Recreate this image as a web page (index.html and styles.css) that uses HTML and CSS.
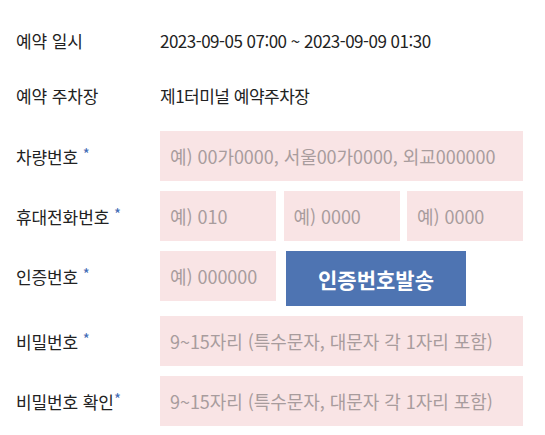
FILE: index.html
```html
<!DOCTYPE html>
<html lang="ko">
<head>
<meta charset="utf-8">
<link rel="stylesheet" href="styles.css">
</head>
<body>
<div class="form">
  <div class="row info">
    <div class="label">예약 일시</div>
    <div class="value">2023-09-05 07:00 ~ 2023-09-09 01:30</div>
  </div>
  <div class="row info last">
    <div class="label">예약 주차장</div>
    <div class="value">제1터미널 예약주차장</div>
  </div>
  <div class="fields">
    <div class="row">
      <div class="label">차량번호&nbsp;<span class="req">*</span></div>
      <div class="inputs"><div class="input wide">예) 00가0000, 서울00가0000, 외교000000</div></div>
    </div>
    <div class="row">
      <div class="label">휴대전화번호&nbsp;<span class="req">*</span></div>
      <div class="inputs three">
        <div class="input">예) 010</div>
        <div class="input">예) 0000</div>
        <div class="input">예) 0000</div>
      </div>
    </div>
    <div class="row">
      <div class="label">인증번호&nbsp;<span class="req">*</span></div>
      <div class="inputs auth">
        <div class="input short">예) 000000</div>
        <button class="send">인증번호발송</button>
      </div>
    </div>
    <div class="row">
      <div class="label">비밀번호&nbsp;<span class="req">*</span></div>
      <div class="inputs"><div class="input wide">9~15자리 (특수문자, 대문자 각 1자리 포함)</div></div>
    </div>
    <div class="row">
      <div class="label">비밀번호 확인<span class="req">*</span></div>
      <div class="inputs"><div class="input wide">9~15자리 (특수문자, 대문자 각 1자리 포함)</div></div>
    </div>
  </div>
</div>
</body>
</html>
```
FILE: styles.css
```css
html, body {
  margin: 0;
  padding: 0;
  background: #ffffff;
}
body {
  font-family: "Noto Sans CJK KR", "Noto Sans", sans-serif;
  color: #222222;
}
.form {
  padding: 13px 22px 0 16px;
}
.row {
  display: flex;
  align-items: flex-start;
}
.info {
  height: 55px;
  align-items: center;
}
.info.last {
  margin-bottom: 8px;
}
.label {
  width: 144px;
  flex: none;
  height: 50px;
  display: flex;
  align-items: center;
  font-size: 17px;
  letter-spacing: -0.1px;
  white-space: pre;
}
.info .label {
  height: auto;
}
.value {
  font-size: 17px;
  letter-spacing: -0.5px;
}
.req {
  color: #3f6bb5;
  font-size: 15px;
  align-self: flex-start;
  margin-top: 12px;
  margin-left: 0;
}
.fields {
  display: flex;
  flex-direction: column;
  gap: 10px;
}
.inputs {
  flex: 1;
  display: flex;
  gap: 7.5px;
}
.input {
  height: 50px;
  background: #f9e4e5;
  color: #a89c9d;
  font-size: 18px;
  letter-spacing: -0.05px;
  padding-left: 10px;
  box-sizing: border-box;
  display: flex;
  align-items: center;
  white-space: nowrap;
}
.input.wide {
  flex: 1;
}
.three .input {
  flex: 1;
}
.input.short {
  width: 116px;
}
.auth {
  gap: 10px;
}
.send {
  width: 180px;
  height: 55px;
  border: none;
  background: #4e74b2;
  color: #ffffff;
  font-family: "Noto Sans CJK KR", "Noto Sans", sans-serif;
  font-weight: 700;
  font-size: 21px;
  letter-spacing: 0;
  padding: 0;
}
```
